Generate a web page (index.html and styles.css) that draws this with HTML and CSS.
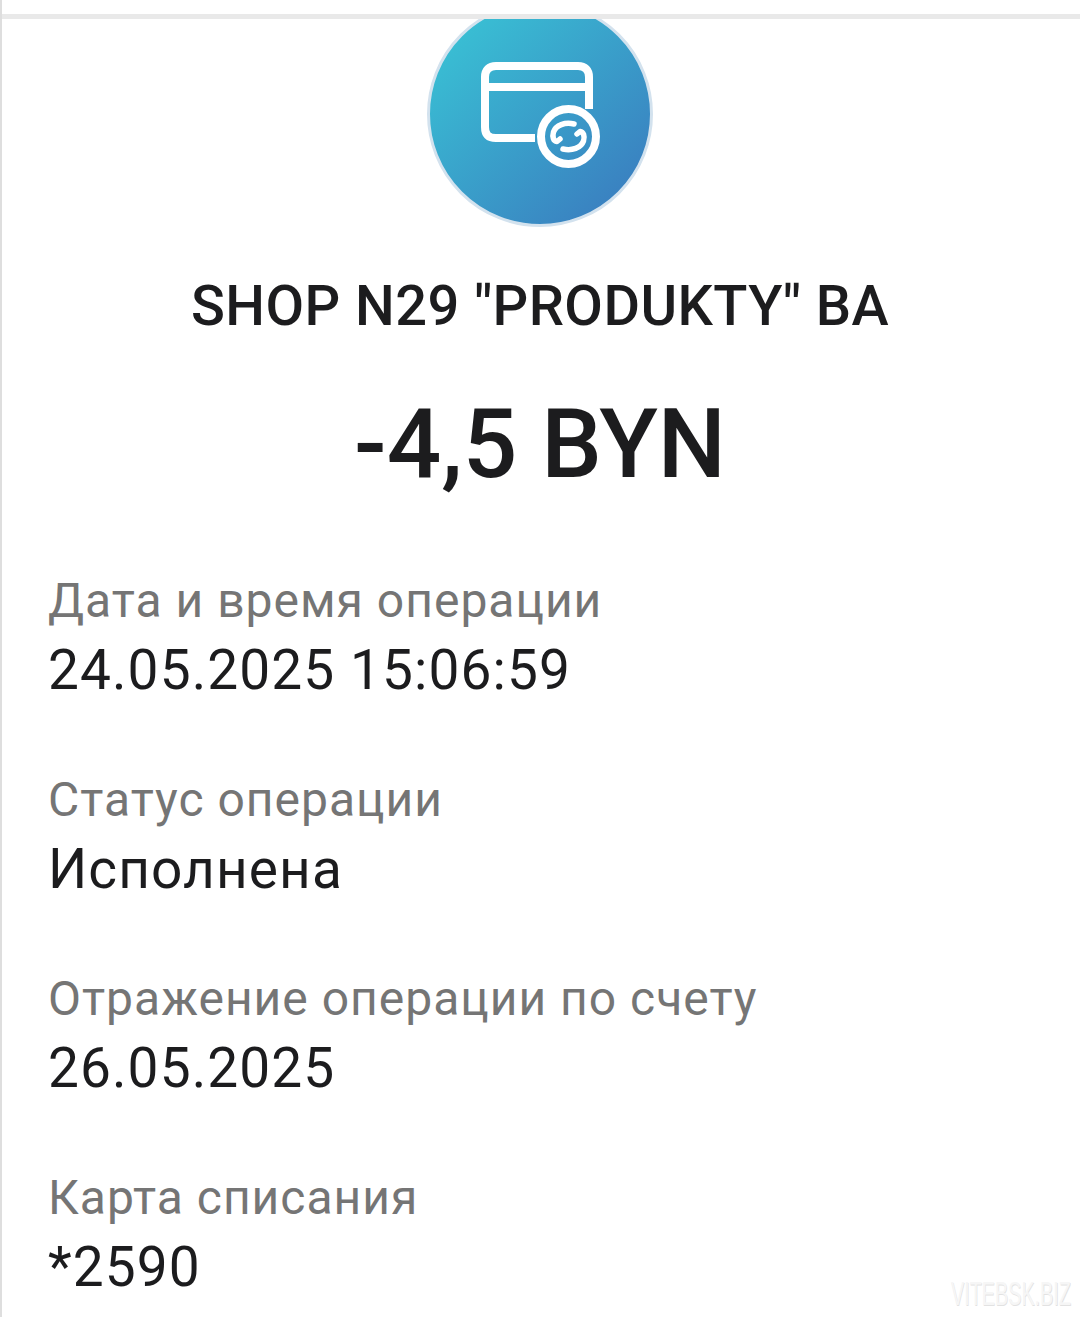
FILE: index.html
```html
<!DOCTYPE html>
<html lang="ru">
<head>
  <meta charset="UTF-8">
  <title>Операция</title>
  <link rel="stylesheet" href="styles.css">
</head>
<body>
  <div class="screen">
    <div class="hero">
      <svg class="hero-icon" viewBox="0 0 226 226" fill="none">
        <defs>
          <linearGradient id="heroGrad" x1="0.12" y1="0.1" x2="0.88" y2="0.9">
            <stop offset="0" stop-color="#39c0d4"/>
            <stop offset="1" stop-color="#3a7fc0"/>
          </linearGradient>
        </defs>
        <circle cx="113" cy="113" r="111.5" fill="url(#heroGrad)" stroke="#d3e2ee" stroke-width="3"/>
        <path d="M108 137H69C61 137 58 133 58 126V76C58 69 62 65 69 65H151C158 65 162 69 162 76V108" stroke="#fff" stroke-width="8"/>
        <path d="M58 86H162" stroke="#fff" stroke-width="8"/>
        <circle cx="141.5" cy="135.5" r="27.5" stroke="#fff" stroke-width="8"/>
        <path d="M147 123C138 121 129 124 126.500 131C125 136 126.500 140 130 140.500L133 138M136 148C145 150 154 147 156.500 140C158 135 156.500 131 153 130.500L150 133" stroke="#fff" stroke-width="5.500" stroke-linecap="round" stroke-linejoin="round"/>
      </svg>
    </div>
    <h1 class="merchant">SHOP N29 "PRODUKTY" BA</h1>
    <div class="amount">-4,5 BYN</div>

    <div class="field">
      <div class="field-label">Дата и время операции</div>
      <div class="field-value">24.05.2025 15:06:59</div>
    </div>
    <div class="field">
      <div class="field-label">Статус операции</div>
      <div class="field-value">Исполнена</div>
    </div>
    <div class="field">
      <div class="field-label">Отражение операции по счету</div>
      <div class="field-value">26.05.2025</div>
    </div>
    <div class="field">
      <div class="field-label">Карта списания</div>
      <div class="field-value">*2590</div>
    </div>

    <div class="watermark">VITEBSK.BIZ</div>
  </div>
</body>
</html>
```

FILE: styles.css
```css
html, body {
  margin: 0;
  padding: 0;
  background: #fff;
}

body {
  font-family: Roboto, "Noto Sans", sans-serif;
  color: #1c1c1e;
}

.screen {
  position: relative;
  width: 1080px;
  height: 1317px;
  box-sizing: border-box;
  padding-top: 14px;
  border-left: 2px solid #dedede;
  overflow: hidden;
}

.hero {
  height: 214px;
  margin-left: -2px;
  border-top: 5px solid #e9e9e9;
  display: flex;
  justify-content: center;
  overflow: hidden;
}

.hero-icon {
  width: 226px;
  height: 226px;
  margin-top: -18px;
  flex: none;
}

.merchant {
  margin: 43px 0 0 -2px;
  font-size: 56px;
  line-height: 60px;
  font-weight: 500;
  letter-spacing: 0.45px;
  text-align: center;
}

.amount {
  margin: 58px 0 0 -2px;
  font-size: 96px;
  line-height: 100px;
  font-weight: 500;
  text-align: center;
}

.field {
  margin: 0 0 0 46px;
  height: 199px;
}

.amount + .field {
  margin-top: 77px;
}

.field-label {
  font-size: 48px;
  line-height: 60px;
  color: #757575;
  letter-spacing: 1px;
}

.field-value {
  font-size: 55px;
  line-height: 70px;
  margin-top: 4px;
  letter-spacing: 1.1px;
}

.watermark {
  position: absolute;
  right: 9px;
  bottom: 6px;
  font-family: "Liberation Sans", sans-serif;
  font-size: 33px;
  line-height: 34px;
  color: #f6f6f6;
  text-shadow: 1px 1px 0 #e2e2e2;
  transform: scaleX(0.6);
  transform-origin: right center;
}
```
